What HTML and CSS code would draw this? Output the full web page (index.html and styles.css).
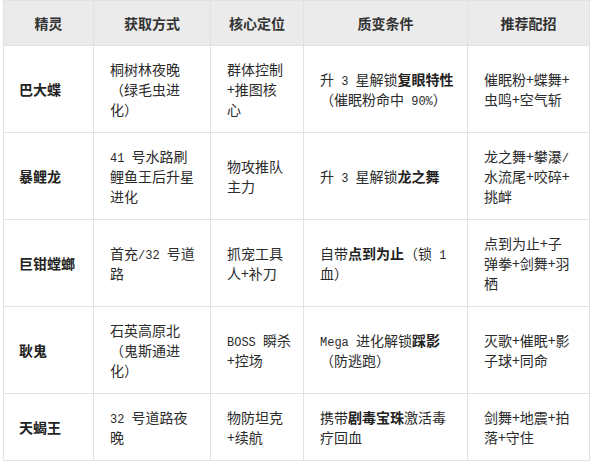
FILE: index.html
```html
<!DOCTYPE html>
<html lang="zh-CN">
<head>
<meta charset="utf-8">
<link rel="stylesheet" href="styles.css">
</head>
<body>
<div class="wrap">
<table class="grid">
  <colgroup>
    <col class="c1"><col class="c2"><col class="c3"><col class="c4"><col class="c5">
  </colgroup>
  <thead>
    <tr>
      <th>精灵</th><th>获取方式</th><th>核心定位</th><th>质变条件</th><th>推荐配招</th>
    </tr>
  </thead>
  <tbody>
    <tr>
      <td class="name">巴大蝶</td>
      <td>桐树林夜晚<br>（绿毛虫进<br>化）</td>
      <td>群体控制<br>+推图核<br>心</td>
      <td>升<span class="en"> 3 </span>星解锁<b>复眼特性</b><br>（催眠粉命中<span class="en"> 90%</span>）</td>
      <td>催眠粉+蝶舞+<br>虫鸣+空气斩</td>
    </tr>
    <tr>
      <td class="name">暴鲤龙</td>
      <td><span class="en">41 </span>号水路刷<br>鲤鱼王后升星<br>进化</td>
      <td>物攻推队<br>主力</td>
      <td>升<span class="en"> 3 </span>星解锁<b>龙之舞</b></td>
      <td>龙之舞+攀瀑<span class="en">/</span><br>水流尾+咬碎+<br>挑衅</td>
    </tr>
    <tr>
      <td class="name">巨钳螳螂</td>
      <td>首充<span class="en">/32 </span>号道<br>路</td>
      <td>抓宠工具<br>人+补刀</td>
      <td>自带<b>点到为止</b>（锁<span class="en"> 1</span><br>血）</td>
      <td>点到为止+子<br>弹拳+剑舞+羽<br>栖</td>
    </tr>
    <tr>
      <td class="name">耿鬼</td>
      <td>石英高原北<br>（鬼斯通进<br>化）</td>
      <td><span class="en">BOSS </span>瞬杀<br>+控场</td>
      <td><span class="en">Mega </span>进化解锁<b>踩影</b><br>（防逃跑）</td>
      <td>灭歌+催眠+影<br>子球+同命</td>
    </tr>
    <tr>
      <td class="name">天蝎王</td>
      <td><span class="en">32 </span>号道路夜<br>晚</td>
      <td>物防坦克<br>+续航</td>
      <td>携带<b>剧毒宝珠</b>激活毒<br>疗回血</td>
      <td>剑舞+地震+拍<br>落+守住</td>
    </tr>
  </tbody>
</table>
</div>
</body>
</html>
```

FILE: styles.css
```css
html, body {
  margin: 0;
  padding: 0;
  background: #ffffff;
}

.wrap {
  padding: 0 0 0 3px;
}

.grid {
  border-collapse: collapse;
  table-layout: fixed;
  width: 586px;
  font-family: "Noto Sans CJK SC", sans-serif;
  font-size: 14px;
  line-height: 20px;
  color: #2b2b2b;
}

.c1 { width: 90px; }
.c2 { width: 117px; }
.c3 { width: 93px; }
.c4 { width: 164px; }
.c5 { width: 122px; }

.grid th,
.grid td {
  border: 1px solid #e2e2e2;
  vertical-align: middle;
  white-space: nowrap;
  overflow: hidden;
}

.grid th {
  background: #ebebeb;
  padding: 12px 10px;
  text-align: center;
  font-weight: bold;
  color: #333333;
}

.grid td {
  padding: 13px 10px 13px 16px;
  text-align: left;
  font-weight: normal;
}

.grid td.name {
  padding-left: 15px;
  font-weight: bold;
  color: #222222;
}

.grid b {
  font-weight: bold;
  color: #222222;
}

.en {
  font-family: "Liberation Mono", monospace;
  font-size: 12px;
  line-height: 1;
}
```
